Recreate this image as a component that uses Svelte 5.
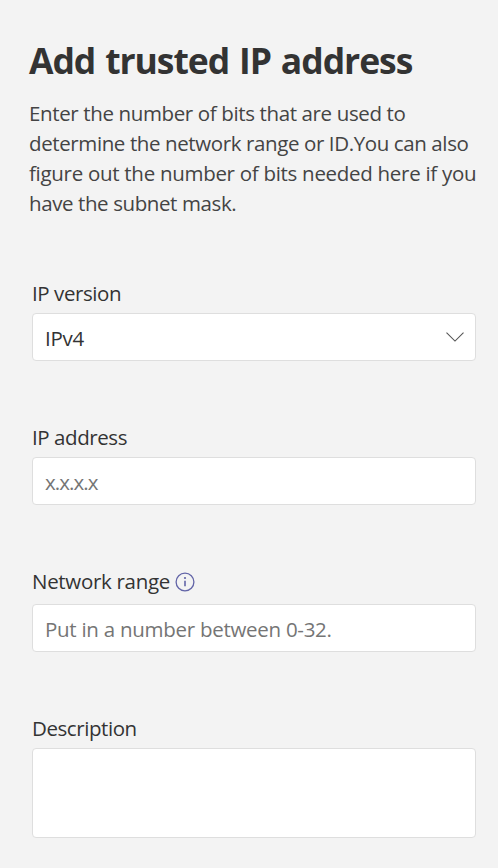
<script>
  const intro = [
    { text: 'Enter the number of bits that are used to', spacing: -0.37 },
    { text: 'determine the network range or ID.You can also', spacing: -0.39 },
    { text: 'figure out the number of bits needed here if you', spacing: -0.29 },
    { text: 'have the subnet mask.', spacing: -0.4 },
  ];
</script>

<main class="panel">
  <h1>Add trusted IP address</h1>
  <p class="intro">
    {#each intro as line}
      <span class="line" style:letter-spacing="{line.spacing}px">{line.text}</span>
    {/each}
  </p>

  <form>
    <div class="field">
      <div class="label version">IP version</div>
      <div class="control select" role="combobox" aria-label="IP version" aria-expanded="false" aria-controls="versions" tabindex="0">
        <span class="ipv">IPv4</span>
        <svg width="20" height="12" viewBox="0 0 20 12" fill="none" stroke="#555" stroke-width="1.1" aria-hidden="true">
          <path d="M1.5 1.7 10 10.1 18.5 1.7" />
        </svg>
      </div>
    </div>

    <div class="field">
      <div class="label address">IP address</div>
      <div class="control hint"><span class="dots">x.x.x.x</span></div>
    </div>

    <div class="field network">
      <div class="label range">
        <span>Network range</span>
        <svg width="20" height="20" viewBox="0 0 20 20" aria-hidden="true">
          <circle cx="10" cy="10" r="8.9" fill="none" stroke="#6264a7" stroke-width="1.3" />
          <path d="M10 8.8V14.2" stroke="#6264a7" stroke-width="1.6" />
          <circle cx="10" cy="6" r="1.1" fill="#6264a7" />
        </svg>
      </div>
      <div class="control hint"><span class="put">Put in a number between 0-32.</span></div>
    </div>

    <div class="field">
      <div class="label description">Description</div>
      <div class="control area"></div>
    </div>
  </form>
</main>

<style>
  :global(body) {
    margin: 0;
    background: #f3f3f3;
  }
  .panel {
    box-sizing: border-box;
    height: 868px;
    padding: 36px 22px 0 29px;
    overflow: hidden;
    background: #f3f3f3;
    color: #333;
    font-family: "Segoe UI", "Open Sans", "Noto Sans", sans-serif;
    font-size: 20.5px;
    line-height: 30px;
    white-space: nowrap;
  }
  h1 {
    margin: 0;
    font-size: 35.5px;
    line-height: 48px;
    font-weight: 700;
    letter-spacing: -1.05px;
    word-spacing: 1.7px;
  }
  .intro {
    margin: 14px 0 0;
    color: #444;
  }
  .line {
    display: block;
  }
  form {
    display: flex;
    flex-direction: column;
    padding: 60px 0 0 3px;
  }
  .field {
    height: 144px;
  }
  .network {
    height: 147px;
  }
  .label {
    height: 30px;
    margin-bottom: 5px;
    display: flex;
    align-items: center;
    letter-spacing: -0.43px;
  }
  .range {
    gap: 5px;
    margin-bottom: 8px;
    letter-spacing: -0.3px;
  }
  .range svg {
    margin-top: 2px;
  }
  .control {
    box-sizing: border-box;
    display: flex;
    align-items: center;
    justify-content: space-between;
    width: 444px;
    height: 48px;
    padding: 1px 10px 0 12px;
    border: 1px solid #dedede;
    border-radius: 4px;
    background: #fff;
    letter-spacing: -0.27px;
  }
  .select {
    padding-top: 2px;
  }
  .select svg {
    margin-top: -2px;
  }
  .hint {
    color: #757575;
  }
  .dots {
    letter-spacing: -0.95px;
  }
  .area {
    height: 90px;
  }
</style>
